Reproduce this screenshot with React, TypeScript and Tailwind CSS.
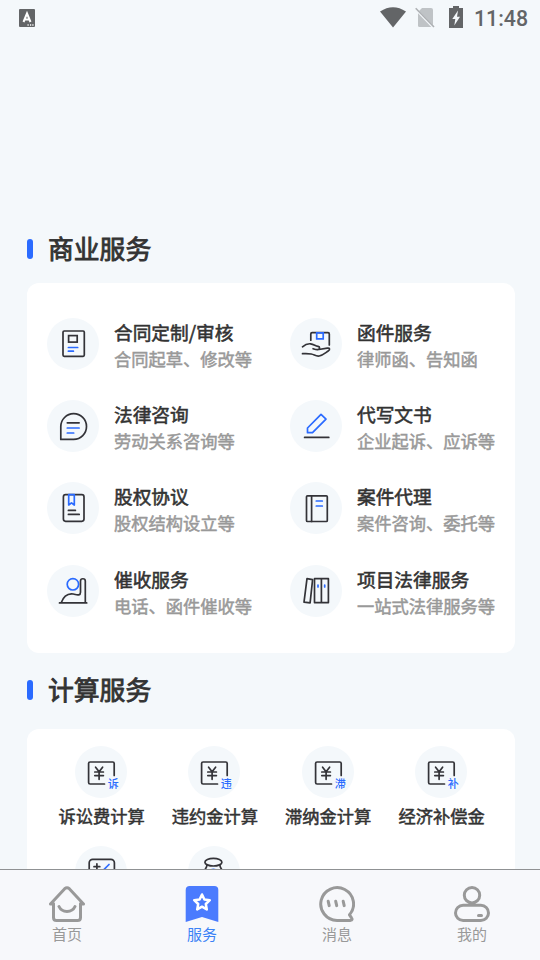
import type { ReactNode } from "react";

const dark = "#333338";
const blue = "#2b6bff";

function Glyph({ children }: { children: ReactNode }) {
  return (
    <span className="block h-[52px] w-[52px] shrink-0 rounded-full bg-[#f4f8fb]">
      <svg
        viewBox="0 0 52 52"
        className="h-[52px] w-[52px]"
        fill="none"
        stroke={dark}
        strokeWidth="1.7"
        strokeLinecap="round"
        strokeLinejoin="round"
      >
        {children}
      </svg>
    </span>
  );
}

const services: { title: string; note: string; icon: ReactNode }[] = [
  {
    title: "合同定制/审核",
    note: "合同起草、修改等",
    icon: (
      <>
        <rect x="16" y="13" width="21.3" height="25.3" rx="1.2" />
        <rect x="21.6" y="17.6" width="8.6" height="6.5" strokeLinejoin="miter" />
        <path d="M21.4 29.5h9.3M21.4 33.2h5" stroke={blue} />
      </>
    ),
  },
  {
    title: "函件服务",
    note: "律师函、告知函",
    icon: (
      <>
        <path d="M20.8 22.2V16q0-1.3 1.3-1.3H38q1.3 0 1.3 1.3v11" />
        <path d="M26.7 14.9v6h6.5v-6z" stroke={blue} strokeLinejoin="miter" />
        <path d="M12.5 28.8c2.600-2.300 5-3.300 8-3 3.500.4 4.500 2 7.500 2.600 2.200.4 2 3-.1 3.200-2 .2-3-.3-4.800-.9M28.800 31.500l8.500-1.300c2.700-.4 2.900 1.500.9 2.800-3 2-5.700 4.400-9 5-3.600.5-4.700-1.400-8-2-2.700-.5-5.500-.3-8.700-.3" />
      </>
    ),
  },
  {
    title: "法律咨询",
    note: "劳动关系咨询等",
    icon: (
      <>
        <path d="M13.800 39.400V26.600A12.850 12.850 0 1 1 26.650 39.400z" />
        <path d="M20.300 22.800h11.800" />
        <path d="M20.300 28h11.800M20.300 33h6.400" stroke={blue} />
      </>
    ),
  },
  {
    title: "代写文书",
    note: "企业起诉、应诉等",
    icon: (
      <>
        <path d="M31 14.300L36 19.200 22.500 32.700H17.500V28z" stroke={blue} />
        <path d="M14.600 37.400h24.200" />
      </>
    ),
  },
  {
    title: "股权协议",
    note: "股权结构设立等",
    icon: (
      <>
        <rect x="16.400" y="12.700" width="20.600" height="26.600" rx="2.200" />
        <path d="M21.700 12.700V23l2.800-2.200L27.300 23V12.700z" stroke={blue} />
        <path d="M21.400 28.400h7M21.400 32.400h10.800" />
      </>
    ),
  },
  {
    title: "案件代理",
    note: "案件咨询、委托等",
    icon: (
      <>
        <rect x="16.500" y="13.800" width="20.800" height="25.700" rx="1" />
        <path d="M21.600 13.800v25.700" />
        <path d="M26.300 19h6M26.300 24h6" stroke={blue} />
      </>
    ),
  },
  {
    title: "催收服务",
    note: "电话、函件催收等",
    icon: (
      <>
        <circle cx="25.900" cy="19.300" r="5.700" stroke={blue} />
        <path d="M12.500 37.900h27.200M14.300 37.500c1-2.500 2-4.500 4-6.300 2.500-2.200 5-2.700 8-2.200 2.300.4 3.600 1.300 5.500.8 1.300-.3 1.700-1.300 1.700-2.600V16c0-3 4.800-3 4.800 0v21.800" />
      </>
    ),
  },
  {
    title: "项目法律服务",
    note: "一站式法律服务等",
    icon: (
      <>
        <path d="M17 13.700l5.600.9-2.500 23.200-6.100-.6z" />
        <path d="M24.500 13.700h13.900v23.900H24.500zM31.400 13.700v23.900" />
        <path d="M28 20v2M34.700 20v2" stroke={blue} />
      </>
    ),
  },
];

function YuanIcon({ mark }: { mark: string }) {
  return (
    <>
      <path d="M29.500 38H15.100q-1.500 0-1.500-1.500V17.500q0-1.500 1.500-1.500h22.600q1.500 0 1.500 1.500v12" />
      <path d="M20.600 21.200l3.500 4.500 3.500-4.500M24.100 25.700v7.600M19.800 26h8.600M19.800 29.600h8.600" />
      <text
        x="32.700"
        y="41.500"
        fontSize="11"
        fontWeight="500"
        fill={blue}
        stroke="none"
        fontFamily='"Noto Sans CJK SC", sans-serif'
      >
        {mark}
      </text>
    </>
  );
}

const calculators: { label: string; icon: ReactNode }[] = [
  { label: "诉讼费计算", icon: <YuanIcon mark="诉" /> },
  { label: "违约金计算", icon: <YuanIcon mark="违" /> },
  { label: "滞纳金计算", icon: <YuanIcon mark="滞" /> },
  { label: "经济补偿金", icon: <YuanIcon mark="补" /> },
  {
    label: "",
    icon: (
      <>
        <rect x="14.200" y="13.300" width="25.200" height="25" rx="3.500" />
        <path d="M19 20.700h5.800M21.900 17.800v5.800" />
        <path d="M34 18.500l-6 6" stroke={blue} />
      </>
    ),
  },
  {
    label: "",
    icon: (
      <>
        <ellipse cx="25.400" cy="16.200" rx="8.500" ry="3.800" />
        <path d="M18.800 19c.5 2-1 3-2.300 5.500M32 19c-.5 2 1 3 2.300 5.500" />
        <path d="M22 24.300q3.400-1.800 6.800 0" stroke={blue} />
      </>
    ),
  },
];

function Heading({ text }: { text: string }) {
  return (
    <h2 className="flex h-9 items-center gap-[15px] text-[25.800px] font-normal text-[#333333]">
      <span className="h-5 w-1.5 rounded-full bg-[#2b6bff]" />
      <span className="-mt-px [-webkit-text-stroke:0.850px_#333333]">{text}</span>
    </h2>
  );
}

function StatusBar() {
  return (
    <header className="flex h-9 shrink-0 items-center justify-between pr-3 pl-[19px] text-[#636567]">
      <svg viewBox="0 0 16 18" className="h-[18px] w-4">
        <rect width="16" height="18" rx="1" fill="currentColor" />
        <path d="M4.500 13l3.500-8.500 3.500 8.500M5.600 10.500h4.800" fill="none" stroke="#fff" strokeWidth="2" />
        <path d="M8.500 16h1.200M11 16h1.200M13.300 16h1.200" stroke="#fff" strokeWidth="1.300" />
      </svg>
      <div className="flex items-center">
        <svg viewBox="0 0 26 21" className="-mt-px h-[21px] w-[26px]">
          <path d="M0 4.500Q13-4 26 4.500L13 20.500z" fill="currentColor" />
        </svg>
        <svg viewBox="0 0 20 21" className="ml-[9px] -mt-px h-[21px] w-5">
          <path d="M7 1h9q2 0 2 2v15.500q0 1.500-1.500 1.500h-12Q3 20 3 18.500V5z" fill="#bfc3c6" />
          <path d="M1 2.300l17.500 18.200" stroke="#f4f8fb" strokeWidth="2.500" />
          <path d="M.7 1.300L19 20" stroke="#adb0b3" strokeWidth="1.600" />
        </svg>
        <svg viewBox="0 0 14 22" className="ml-[14px] -mt-0.5 h-[22px] w-3.5">
          <path d="M4 0h6v2h4v20H0V2h4z" fill="currentColor" />
          <path d="M9 4.500L3.300 13H6.300L5.300 19.500 11 10.800H8z" fill="#f4f8fb" />
        </svg>
        <span className="mt-0.5 ml-[11px] w-[54px] font-[Roboto] text-[21.300px] leading-6 font-medium whitespace-nowrap">
          11:48
        </span>
      </div>
    </header>
  );
}

const tabs: { label: string; active?: boolean; icon: ReactNode }[] = [
  {
    label: "首页",
    icon: (
      <path d="M4.500 17.500v14Q4.500 34.500 7.500 34.500h21q3 0 3-3v-14M1.500 18L15.700 2.700q2.300-2 4.600 0L34.500 18M1.500 18h3M31.500 18h3M10 20.500c3 6.600 13 6.600 16 0" />
    ),
  },
  {
    label: "服务",
    active: true,
    icon: (
      <>
        <path d="M1.700 4q0-4 4-4h24.600q4 0 4 4v32L18 31 1.700 36z" fill="#4b7bfe" stroke="none" />
        <path d="M18 8.500l2.400 5 5.400.7-4 3.800 1 5.400-4.800-2.700-4.800 2.700 1-5.400-4-3.800 5.400-.7z" stroke="#fff" strokeWidth="2.500" />
      </>
    ),
  },
  {
    label: "消息",
    icon: (
      <>
        <path d="M30.500 28.800A16.400 16.400 0 1 0 18 34.400H31.500q2.500-.6 1-2.600z" />
        <path d="M9.200 15.300l1 4.300M16.700 15.300l1 4.300M24.200 15.300l1 4.300" />
      </>
    ),
  },
  {
    label: "我的",
    icon: (
      <>
        <circle cx="18" cy="9.200" r="7.700" />
        <rect x="1.500" y="19.300" width="33" height="15.200" rx="7.600" />
        <path d="M24.500 29.500h3" />
      </>
    ),
  },
];

export default function App() {
  return (
    <div className="flex h-[960px] w-[540px] flex-col overflow-hidden bg-[#f4f8fb] font-['Noto_Sans_CJK_SC',sans-serif]">
      <StatusBar />
      <main className="min-h-0 flex-1 overflow-hidden pr-[25px] pl-[27px] pt-[195px]">
        <Heading text="商业服务" />
        <section className="mt-4 grid h-[370px] auto-rows-[82.400px] grid-cols-[243px_1fr] rounded-xl bg-white pt-[34.600px] pl-5">
          {services.map((s) => (
            <div key={s.title} className="flex gap-[15px]">
              <Glyph>{s.icon}</Glyph>
              <div className="whitespace-nowrap">
                <h3 className="h-[28px] text-[18.700px] leading-[28px] font-normal text-[#333333] [-webkit-text-stroke:0.550px_#333333]">{s.title}</h3>
                <p className="h-[26px] text-[17.250px] leading-[26px] font-normal text-[#999999] [-webkit-text-stroke:0.500px_#999999]">{s.note}</p>
              </div>
            </div>
          ))}
        </section>
        <div className="mt-[19px]">
          <Heading text="计算服务" />
        </div>
        <section className="mt-[21px] grid h-[300px] auto-rows-[100px] grid-cols-[repeat(4,113.300px)] rounded-t-xl bg-white pt-[17px] pl-[17.500px]">
          {calculators.map((c, i) => (
            <div key={i} className="flex flex-col items-center">
              <Glyph>{c.icon}</Glyph>
              <span className="mt-[5px] pl-px text-[17.250px] leading-[26px] font-normal whitespace-nowrap text-[#333333] [-webkit-text-stroke:0.500px_#333333]">
                {c.label}
              </span>
            </div>
          ))}
        </section>
      </main>
      <nav className="grid h-[91px] shrink-0 grid-cols-4 border-t border-[#8f9193] bg-[#f7f8fb]">
        {tabs.map((t) => (
          <div
            key={t.label}
            className={`flex flex-col items-center pt-4 pr-px text-[15px] ${t.active ? "text-[#3b82f6]" : "text-[#999999]"}`}
          >
            <svg
              viewBox="0 0 36 36"
              className="h-9 w-9"
              fill="none"
              stroke="currentColor"
              strokeWidth="3"
              strokeLinecap="round"
              strokeLinejoin="round"
            >
              {t.icon}
            </svg>
            <span className="mt-px leading-[22px]">{t.label}</span>
          </div>
        ))}
      </nav>
    </div>
  );
}
